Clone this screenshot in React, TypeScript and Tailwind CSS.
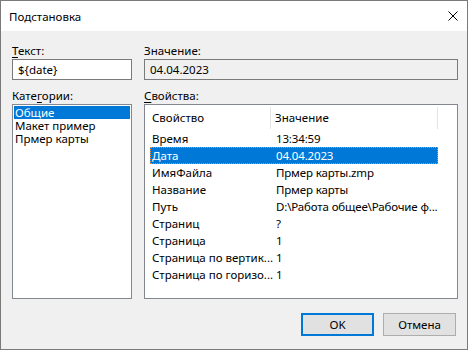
const font = { fontFamily: '"Segoe UI", "Noto Sans", "Liberation Sans", sans-serif' }

const categories = ['Общие', 'Макет пример', 'Прмер карты']

const props: [string, string][] = [
  ['Время', '13:34:59'],
  ['Дата', '04.04.2023'],
  ['ИмяФайла', 'Прмер карты.zmp'],
  ['Название', 'Прмер карты'],
  ['Путь', 'D:\\Работа общее\\Рабочие ф...'],
  ['Страниц', '?'],
  ['Страница', '1'],
  ['Страница по вертик...', '1'],
  ['Страница по горизо...', '1'],
]

function CloseIcon() {
  return (
    <svg width="10" height="10" viewBox="0 0 10 10" className="block">
      <path d="M0.5 0.5 L9.5 9.5 M9.5 0.5 L0.5 9.5" stroke="#000" strokeWidth="1" fill="none" />
    </svg>
  )
}

export default function App() {
  return (
    <div className="h-[351px] w-[469px] bg-white text-[11.5px] leading-[15px] text-black" style={font}>
      <div className="flex h-[350px] w-[468px] flex-col border border-[#7a7a7a] bg-[#f0f0f0]">
        {/* title bar */}
        <div className="flex h-[30px] shrink-0 items-center justify-between bg-white pl-[8px] pr-[9px]">
          <span>Подстановка</span>
          <CloseIcon />
        </div>

        <div className="flex flex-1 flex-col pl-[11px] pr-[9px] pt-[12px]">
          <div className="flex gap-[12px]">
            <div className="w-[120px]">
              <div className="h-[15px]">
                <span className="underline underline-offset-2">Т</span>екст:
              </div>
              <div className="mt-[1px] flex h-[21px] items-center border border-[#7a7a7a] bg-white pl-[5px]">
                {'${date}'}
              </div>
            </div>
            <div className="w-[314px]">
              <div className="h-[15px]">Значение:</div>
              <div className="mt-[1px] flex h-[21px] items-center border border-[#7a7a7a] bg-[#f0f0f0] pl-[5px]">
                04.04.2023
              </div>
            </div>
          </div>

          <div className="mt-[8px] flex gap-[12px]">
            <div className="w-[120px]">
              <div className="h-[15px]">
                Кате<span className="underline underline-offset-2">г</span>ории:
              </div>
              <div className="mt-[1px] h-[195px] border border-[#828790] bg-white p-[1px]">
                {categories.map((c, i) => (
                  <div
                    key={c}
                    className={
                      i === 0
                        ? 'flex h-[13px] items-center bg-[#0078d7] pl-[1px] leading-[13px] text-white'
                        : 'flex h-[13px] items-center pl-[1px] leading-[13px]'
                    }
                  >
                    {c}
                  </div>
                ))}
              </div>
            </div>
            <div className="w-[314px]">
              <div className="h-[15px]">
                <span className="underline underline-offset-2">С</span>войства:
              </div>
              <div className="mt-[1px] h-[195px] border border-[#828790] bg-white">
                <div className="flex h-[25px] items-center">
                  <div className="flex h-full w-[126px] items-center justify-between pl-[7px]">
                    <span>Свойство</span>
                    <div className="h-[22px] w-[1px] bg-[#e5e5e5]" />
                  </div>
                  <div className="flex h-full w-[167px] items-center justify-between pl-[4px]">
                    <span>Значение</span>
                    <div className="h-[22px] w-[1px] bg-[#e5e5e5]" />
                  </div>
                </div>
                <div className="pl-[5px]">
                  {props.map(([k, v], i) => (
                    <div
                      key={k}
                      className={
                        i === 1
                          ? 'flex h-[17px] w-[288px] items-center whitespace-nowrap bg-[#0078d7] text-white outline-1 -outline-offset-1 outline-dotted outline-[#ff8728]'
                          : 'flex h-[17px] w-[288px] items-center whitespace-nowrap'
                      }
                    >
                      <span className="w-[124px] shrink-0 overflow-hidden pl-[2px]">{k}</span>
                      <span className="pl-[2px] tracking-[-0.15px]">{v}</span>
                    </div>
                  ))}
                </div>
              </div>
            </div>
          </div>

          <div className="mt-[14px] flex justify-end gap-[9px] pr-[2px]">
            <button className="flex h-[23px] w-[73px] items-center justify-center border-2 border-[#0078d7] bg-[#e1e1e1]">
              OK
            </button>
            <button className="flex h-[23px] w-[73px] items-center justify-center border border-[#adadad] bg-[#e1e1e1]">
              Отмена
            </button>
          </div>
        </div>
      </div>
    </div>
  )
}
